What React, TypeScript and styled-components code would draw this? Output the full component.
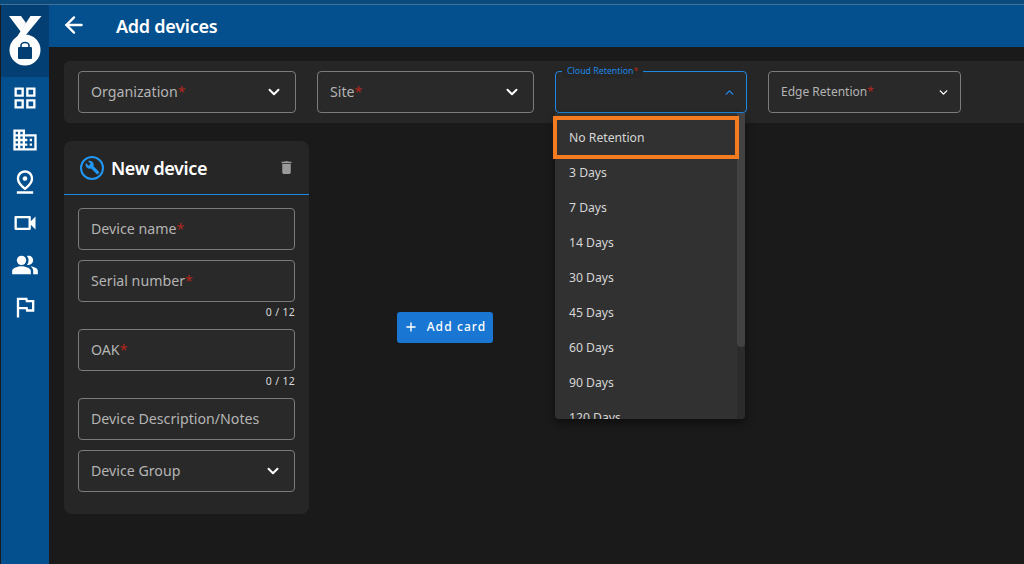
import React from 'react';
import styled, { createGlobalStyle } from 'styled-components';
import { ArrowLeft, ChevronDown, ChevronUp, Plus } from 'lucide-react';
import {
  MdOutlineGridView,
  MdDomain,
  MdOutlinePinDrop,
  MdOutlineVideocam,
  MdPeopleAlt,
  MdOutlineFlag,
  MdDelete,
  MdBuild,
} from 'react-icons/md';

const GlobalStyle = createGlobalStyle`
  html, body {
    margin: 0;
    padding: 0;
    height: 100%;
    background: #1a1a1a;
    overflow: hidden;
    font-family: "Noto Sans", "Open Sans", sans-serif;
  }
  * {
    box-sizing: border-box;
  }
`;

const Page = styled.div`
  width: 1024px;
  height: 564px;
  display: flex;
  flex-direction: column;
  background: #1a1a1a;
`;

const TopStrip = styled.div`
  height: 5px;
  background: #0a4a7c;
  border-bottom: 1px solid #3f7199;
`;

const Body = styled.div`
  flex: 1;
  display: flex;
  min-height: 0;
`;

const Sidebar = styled.nav`
  width: 48px;
  margin-left: 1px;
  background: #04508e;
  display: flex;
  flex-direction: column;
  align-items: center;
`;

const LogoBlock = styled.div`
  width: 100%;
  height: 72px;
  background: #033f72;
  display: flex;
  align-items: center;
  justify-content: center;
  padding-bottom: 3px;
`;

const NavList = styled.div`
  display: flex;
  flex-direction: column;
  align-items: center;
  gap: 13.8px;
  padding-top: 7px;
  color: #fff;
  font-size: 28px;

  svg {
    display: block;
  }
`;

const Main = styled.div`
  flex: 1;
  min-width: 0;
  display: flex;
  flex-direction: column;
`;

const Header = styled.header`
  height: 42px;
  background: #04508e;
  display: flex;
  align-items: center;
  padding-left: 12px;
  color: #fff;
  padding-bottom: 2px;
`;

const Title = styled.h1`
  margin: 2px 0 0 29px;
  font-size: 18px;
  font-weight: 600;
  letter-spacing: -0.25px;
`;

const Content = styled.div`
  flex: 1;
  padding: 14px 0 0 15px;
  display: flex;
  flex-direction: column;
  gap: 18px;
`;

const FilterBar = styled.div`
  height: 62px;
  background: #262626;
  border-radius: 6px 0 0 6px;
  padding: 10px 14px;
  display: flex;
  gap: 21px;
`;

const FieldBox = styled.div<{ $width: number; $focused?: boolean }>`
  position: relative;
  width: ${(p) => p.$width}px;
  height: 42px;
  flex: none;
  border: 1px solid ${(p) => (p.$focused ? '#1e88e5' : '#7b7b7b')};
  border-radius: 4px;
  display: flex;
  align-items: center;
  justify-content: space-between;
  padding: 0 12px;
  background: #292929;
`;

const Label = styled.span<{ $small?: boolean }>`
  font-size: ${(p) => (p.$small ? 12 : 14.2)}px;
  color: #b4b4b4;
  white-space: nowrap;
  padding-bottom: 2px;
`;

const Star = styled.span`
  color: #b3261e;
`;

const SmallArrow = styled.span`
  display: flex;
  margin-right: -2px;
`;

const FloatingLabel = styled.span`
  position: absolute;
  top: -8px;
  left: 6px;
  padding: 0 5px;
  background: #262626;
  color: #1e88e5;
  font-size: 8.8px;
  line-height: 14px;
  white-space: nowrap;
`;

const Menu = styled.ul`
  position: absolute;
  top: 41px;
  left: -1px;
  width: 190px;
  height: 306px;
  margin: 0;
  padding: 7px 0 0;
  list-style: none;
  background: #313131;
  border-radius: 0 0 4px 4px;
  box-shadow: 0 4px 8px rgba(0, 0, 0, 0.45);
  overflow: hidden;
  z-index: 5;
`;

const MenuItem = styled.li`
  height: 35px;
  padding-left: 14px;
  display: flex;
  align-items: center;
  font-size: 12.2px;
  color: #d6d6d6;
`;

const ScrollTrack = styled.div`
  position: absolute;
  top: 0;
  right: 0;
  width: 8px;
  height: 100%;
  background: #2b2b2b;
`;

const ScrollThumb = styled.div`
  width: 100%;
  height: 234px;
  background: #424242;
  border-radius: 0 0 4px 4px;
`;

const Highlight = styled.div`
  position: absolute;
  top: 44px;
  left: -3px;
  width: 186px;
  height: 43px;
  border: 4.5px solid #f47b20;
  z-index: 6;
`;

const Workspace = styled.div`
  flex: 1;
  display: flex;
  align-items: flex-start;
`;

const Card = styled.section`
  width: 245px;
  height: 373px;
  background: #262626;
  border-radius: 8px;
  flex: none;
`;

const CardHeader = styled.div`
  height: 54px;
  border-bottom: 1px solid #1e88e5;
  display: flex;
  align-items: center;
  padding: 0 15px 0 16px;
  color: #fff;
`;

const WrenchBadge = styled.span`
  width: 24px;
  height: 24px;
  border-radius: 50%;
  border: 2px solid #2196f3;
  display: flex;
  align-items: center;
  justify-content: center;
  color: #2196f3;
  font-size: 15px;
  flex: none;
`;

const CardTitle = styled.h2`
  flex: 1;
  margin: 0 0 0 7px;
  font-size: 18px;
  font-weight: 600;
  letter-spacing: -0.4px;
`;

const Trash = styled.span`
  color: #9a9a9a;
  font-size: 17px;
  display: flex;
  margin-right: -1px;
`;

const CardBody = styled.div`
  padding: 13px 14px 0;
  display: flex;
  flex-direction: column;
  gap: 10px;
`;

const FieldGroup = styled.div`
  display: flex;
  flex-direction: column;
`;

const Counter = styled.span`
  height: 17px;
  padding-top: 3px;
  text-align: right;
  font-size: 10.5px;
  line-height: 14px;
  color: #d9d9d9;
  letter-spacing: 0.3px;
`;

const ButtonArea = styled.div`
  width: 272px;
  flex: none;
  display: flex;
  justify-content: center;
  padding-top: 171px;
`;

const AddButton = styled.button`
  width: 96px;
  height: 31px;
  border: none;
  border-radius: 3px;
  background: #1976d2;
  color: #fff;
  font-family: inherit;
  font-size: 12px;
  font-weight: 500;
  letter-spacing: 1.1px;
  display: flex;
  align-items: center;
  justify-content: center;
  gap: 9px;
  padding: 0 0 2px;
`;

const Logo = () => (
  <svg width="34" height="52" viewBox="0 0 34 52">
    <path d="M1 2 H13 L18 9 L13 18 Z" fill="#fff" />
    <circle cx="17" cy="36" r="15.5" fill="#fff" />
    <path d="M22.5 2 H33.5 L17 22 L3 32 Z" fill="#fff" />
    <rect x="10" y="33" width="14" height="12" rx="1" fill="#033f72" />
    <path d="M13 33 V31.5 A4 3 0 0 1 21 31.5 V33" fill="none" stroke="#033f72" strokeWidth="1.6" />
  </svg>
);

const retention = ['No Retention', '3 Days', '7 Days', '14 Days', '30 Days', '45 Days', '60 Days', '90 Days', '120 Days'];

const Required = ({ text, small }: { text: string; small?: boolean }) => (
  <Label $small={small}>
    {text}
    <Star>*</Star>
  </Label>
);

const App: React.FC = () => (
  <Page>
    <GlobalStyle />
    <TopStrip />
    <Body>
      <Sidebar>
        <LogoBlock>
          <Logo />
        </LogoBlock>
        <NavList>
          <MdOutlineGridView />
          <MdDomain />
          <MdOutlinePinDrop />
          <MdOutlineVideocam />
          <MdPeopleAlt />
          <MdOutlineFlag />
        </NavList>
      </Sidebar>
      <Main>
        <Header>
          <ArrowLeft size={26} strokeWidth={2.2} />
          <Title>Add devices</Title>
        </Header>
        <Content>
          <FilterBar>
            <FieldBox $width={218}>
              <Required text="Organization" />
              <ChevronDown size={18} color="#fff" strokeWidth={2.6} />
            </FieldBox>
            <FieldBox $width={217}>
              <Required text="Site" />
              <ChevronDown size={18} color="#fff" strokeWidth={2.6} />
            </FieldBox>
            <FieldBox $width={192} $focused>
              <FloatingLabel>
                Cloud Retention<Star>*</Star>
              </FloatingLabel>
              <span />
              <SmallArrow>
                <ChevronUp size={13} color="#1e88e5" strokeWidth={2.6} />
              </SmallArrow>
              <Menu>
                {retention.map((r) => (
                  <MenuItem key={r}>{r}</MenuItem>
                ))}
                <ScrollTrack>
                  <ScrollThumb />
                </ScrollTrack>
              </Menu>
              <Highlight />
            </FieldBox>
            <FieldBox $width={193}>
              <Required text="Edge Retention" small />
              <SmallArrow>
                <ChevronDown size={13} color="#fff" strokeWidth={2.6} />
              </SmallArrow>
            </FieldBox>
          </FilterBar>
          <Workspace>
            <Card>
              <CardHeader>
                <WrenchBadge>
                  <MdBuild />
                </WrenchBadge>
                <CardTitle>New device</CardTitle>
                <Trash>
                  <MdDelete />
                </Trash>
              </CardHeader>
              <CardBody>
                <FieldBox $width={217}>
                  <Required text="Device name" />
                </FieldBox>
                <FieldGroup>
                  <FieldBox $width={217}>
                    <Required text="Serial number" />
                  </FieldBox>
                  <Counter>0 / 12</Counter>
                </FieldGroup>
                <FieldGroup>
                  <FieldBox $width={217}>
                    <Required text="OAK" />
                  </FieldBox>
                  <Counter>0 / 12</Counter>
                </FieldGroup>
                <FieldBox $width={217}>
                  <Label>Device Description/Notes</Label>
                </FieldBox>
                <FieldBox $width={217}>
                  <Label>Device Group</Label>
                  <ChevronDown size={18} color="#fff" strokeWidth={2.6} />
                </FieldBox>
              </CardBody>
            </Card>
            <ButtonArea>
              <AddButton>
                <Plus size={14} strokeWidth={2.4} />
                Add card
              </AddButton>
            </ButtonArea>
          </Workspace>
        </Content>
      </Main>
    </Body>
  </Page>
);

export default App;
